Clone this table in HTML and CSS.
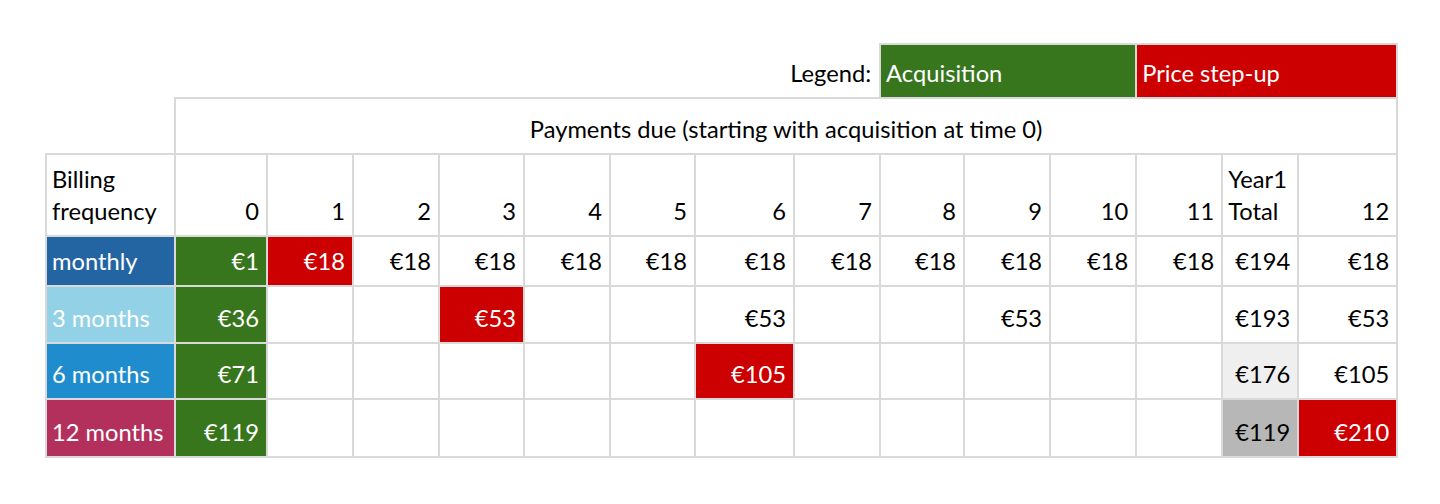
FILE: index.html
```html
<!DOCTYPE html>
<html>
<head>
<meta charset="utf-8">
<link rel="stylesheet" href="styles.css">
</head>
<body>
<table class="grid">
  <colgroup>
    <col style="width:129px"><col style="width:92px"><col style="width:86px"><col style="width:86px"><col style="width:85px"><col style="width:86px"><col style="width:85px"><col style="width:99px"><col style="width:86px"><col style="width:84px"><col style="width:86px"><col style="width:86px"><col style="width:86px"><col style="width:76px"><col style="width:99px">
  </colgroup>
  <tr class="r-legend">
    <td class="plain num" colspan="9">Legend:</td>
    <td class="acq txt" colspan="3">Acquisition</td>
    <td class="step txt" colspan="3">Price step-up</td>
  </tr>
  <tr class="r-pay">
    <td class="plain"></td>
    <td class="center" colspan="14">Payments due (starting with acquisition at time 0)</td>
  </tr>
  <tr class="r-head">
    <td class="txt">Billing<br>frequency</td>
    <td class="num">0</td><td class="num">1</td><td class="num">2</td><td class="num">3</td><td class="num">4</td><td class="num">5</td><td class="num">6</td><td class="num">7</td><td class="num">8</td><td class="num">9</td><td class="num">10</td><td class="num">11</td>
    <td class="txt">Year1<br>Total</td>
    <td class="num">12</td>
  </tr>
  <tr class="r-monthly">
    <td class="txt f-monthly">monthly</td>
    <td class="num acq">€1</td><td class="num step">€18</td><td class="num">€18</td><td class="num">€18</td><td class="num">€18</td><td class="num">€18</td><td class="num">€18</td><td class="num">€18</td><td class="num">€18</td><td class="num">€18</td><td class="num">€18</td><td class="num">€18</td>
    <td class="num">€194</td><td class="num">€18</td>
  </tr>
  <tr class="r-q">
    <td class="txt f-q">3 months</td>
    <td class="num acq">€36</td><td></td><td></td><td class="num step">€53</td><td></td><td></td><td class="num">€53</td><td></td><td></td><td class="num">€53</td><td></td><td></td>
    <td class="num">€193</td><td class="num">€53</td>
  </tr>
  <tr class="r-h">
    <td class="txt f-h">6 months</td>
    <td class="num acq">€71</td><td></td><td></td><td></td><td></td><td></td><td class="num step">€105</td><td></td><td></td><td></td><td></td><td></td>
    <td class="num g-light">€176</td><td class="num">€105</td>
  </tr>
  <tr class="r-y">
    <td class="txt f-y">12 months</td>
    <td class="num acq">€119</td><td></td><td></td><td></td><td></td><td></td><td></td><td></td><td></td><td></td><td></td><td></td>
    <td class="num g-dark">€119</td><td class="num step">€210</td>
  </tr>
</table>
</body>
</html>
```
FILE: styles.css
```css
html, body {
  margin: 0;
  padding: 0;
  background: #ffffff;
}
body {
  padding: 43px 0 0 45px;
  font-family: Lato, "Open Sans", sans-serif;
  font-size: 23.7px;
  color: #000000;
}
.grid {
  border-collapse: collapse;
  table-layout: fixed;
  width: 1351px;
}
.grid td {
  border: 2px solid #d9d9d9;
  padding: 0 7px 8px 7px;
  vertical-align: bottom;
  line-height: 32px;
  white-space: nowrap;
  overflow: hidden;
}
.grid td.txt {
  padding-left: 5px;
}
.grid td.plain {
  border: none;
}
.num { text-align: right; }
.txt { text-align: left; }
.center { text-align: center; }

.r-legend { height: 54px; }
.r-pay { height: 56px; }
.r-head { height: 82px; }
.r-monthly { height: 50px; }
.r-q { height: 57px; }
.r-h { height: 56px; }
.r-y { height: 58px; }

.r-legend td.plain { padding-right: 8px; }

.acq { background: #38761d; color: #ffffff; }
.step { background: #cc0000; color: #ffffff; }
.f-monthly { background: #2365a3; color: #ffffff; }
.f-q { background: #93d2e6; color: #ffffff; }
.f-h { background: #1f8dcd; color: #ffffff; }
.f-y { background: #b3305c; color: #ffffff; }
.g-light { background: #efefef; }
.g-dark { background: #b7b7b7; }
```
